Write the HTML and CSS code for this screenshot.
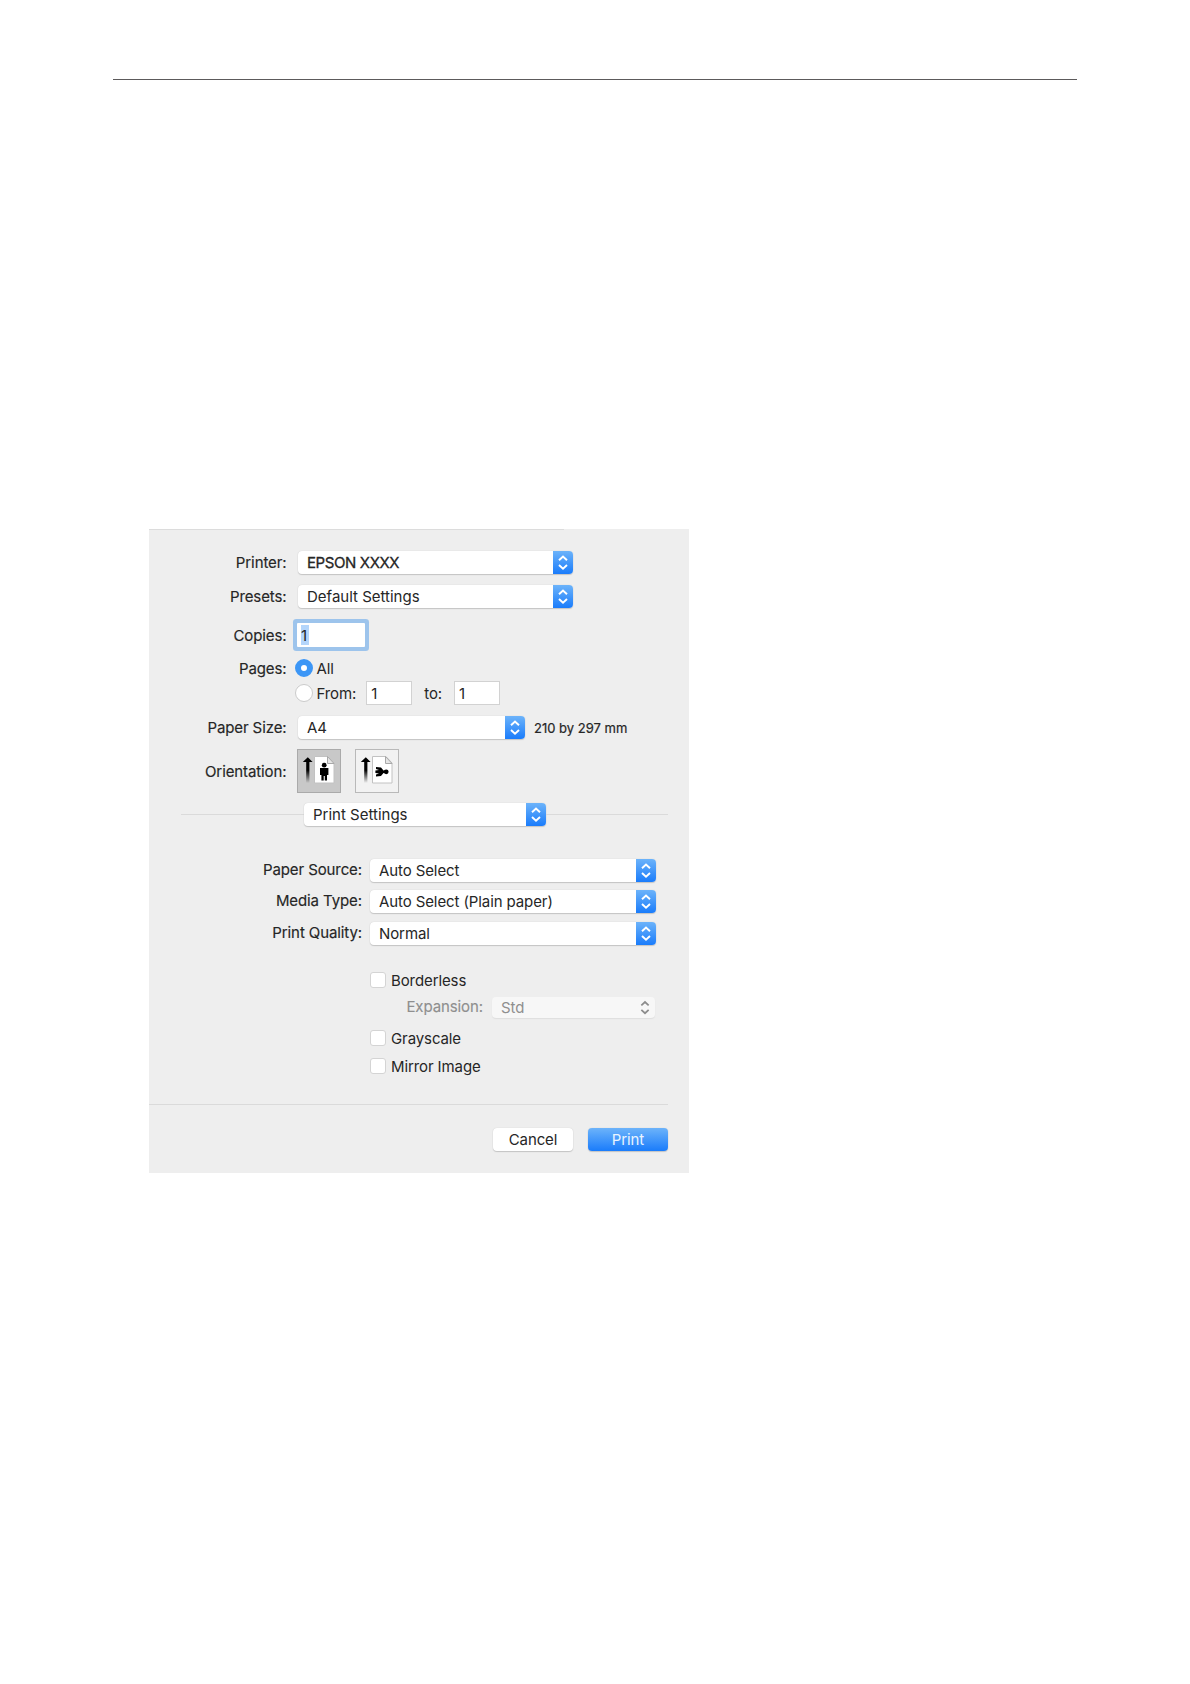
FILE: index.html
```html
<!DOCTYPE html>
<html lang="en">
    <head>
        <meta charset="UTF-8">
        <title>Print</title>
        <link rel="stylesheet" href="styles.css">
    </head>

    <body>
        <svg class="defs" width="0" height="0">
            <symbol id="arrows" viewBox="0 0 20 23">
                <path d="M6 9.3 L10 5.5 L14 9.3 M6 14 L10 17.8 L14 14" fill="none" stroke="currentColor" stroke-width="1.9"/>
            </symbol>
            <linearGradient id="fade" x1="0" y1="0" x2="0" y2="1">
                <stop offset="0.5" stop-color="#000"/>
                <stop offset="1" stop-color="#000" stop-opacity="0"/>
            </linearGradient>
            <symbol id="sheet" viewBox="0 0 44 44">
                <path d="M5.8 13 L10.8 8.3 L15.6 13 H12.4 V34 H9.2 V13 Z" fill="url(#fade)"/>
                <path d="M17.5 7.5 H31 L37 14 V34 H17.5 Z" fill="#fff" stroke="#c2c2c2"/>
                <path d="M30.5 7.5 V14.5 H37 Z" fill="#e6e6e6" stroke="#a8a8a8"/>
            </symbol>
        </svg>

        <hr class="page-line">

        <div class="dialog">
            <div class="row">
                <label>Printer:</label>
                <div class="select printer"><span class="epson">EPSON XXXX</span><svg><use href="#arrows"/></svg></div>
            </div>
            <div class="row presets">
                <label>Presets:</label>
                <div class="select printer"><span class="wide">Default Settings</span><svg><use href="#arrows"/></svg></div>
            </div>
            <div class="row copies">
                <label>Copies:</label>
                <div class="field focus"><span>1</span></div>
            </div>
            <div class="row pages">
                <label>Pages:</label>
                <i class="radio on"></i>
                <span>All</span>
            </div>
            <div class="row range">
                <i class="radio"></i>
                <span>From:</span>
                <div class="field from">1</div>
                <span>to:</span>
                <div class="field to">1</div>
            </div>
            <div class="row paper">
                <label>Paper Size:</label>
                <div class="select size"><span>A4</span><svg><use href="#arrows"/></svg></div>
                <span class="note">210 by 297 mm</span>
            </div>
            <div class="row orientation">
                <label>Orientation:</label>
                <div class="orient active">
                    <svg width="44" height="44">
                        <use href="#sheet"/>
                        <circle cx="27.2" cy="16.2" r="2.4"/>
                        <path d="M23 19 H31.4 V26 H30 V31.5 H27.8 V27 H26.7 V31.5 H24.4 V26 H23 Z"/>
                    </svg>
                </div>
                <div class="orient">
                    <svg width="44" height="44">
                        <use href="#sheet"/>
                        <circle cx="31.2" cy="22.8" r="2.4"/>
                        <path d="M21 18 L26 18.6 L28.5 21.5 H30 V24 H28.5 L26 27 L21 27.6 V25.5 L24 24.6 L20.4 24 V21.6 L24 21 L21 20 Z"/>
                    </svg>
                </div>
            </div>

            <div class="section">
                <div class="select pane"><span class="wide">Print Settings</span><svg><use href="#arrows"/></svg></div>
            </div>

            <div class="settings">
                <div class="row">
                    <label>Paper Source:</label>
                    <div class="select"><span>Auto Select</span><svg><use href="#arrows"/></svg></div>
                </div>
                <div class="row">
                    <label>Media Type:</label>
                    <div class="select"><span>Auto Select (Plain paper)</span><svg><use href="#arrows"/></svg></div>
                </div>
                <div class="row quality">
                    <label>Print Quality:</label>
                    <div class="select"><span>Normal</span><svg><use href="#arrows"/></svg></div>
                </div>
            </div>

            <div class="check borderless"><i></i><span>Borderless</span></div>
            <div class="row expansion">
                <label>Expansion:</label>
                <div class="select disabled"><span>Std</span><svg><use href="#arrows"/></svg></div>
            </div>
            <div class="check gray"><i></i><span>Grayscale</span></div>
            <div class="check mirror"><i></i><span>Mirror Image</span></div>

            <div class="buttons">
                <div class="btn">Cancel</div>
                <div class="btn primary">Print</div>
            </div>
        </div>
    </body>
</html>
```

FILE: styles.css
```css
* {
	margin: 0;
	padding: 0;
	box-sizing: border-box;
}

body {
	background: white;
	color: #262626;
	font-family: Inter, "Liberation Sans", sans-serif;
	font-size: 15px;
	letter-spacing: -0.1px;
	white-space: nowrap;
}

.defs {
	display: block;
}

.page-line {
	width: 964px;
	margin: 79px 0 0 113px;
	border: none;
	border-top: 1px solid #5c5a5b;
}

.dialog {
	width: 540px;
	height: 644px;
	margin: 449px 0 0 149px;
	padding-top: 22px;
	background: linear-gradient(#dcdcdc, #dcdcdc) no-repeat 0 0 / 415px 1px #eeeeee;
}

.row {
	display: flex;
	align-items: center;
	height: 23px;
}

.row label {
	width: 138px;
	margin-right: 11px;
	padding-right: 0.5px;
	text-align: right;
	-webkit-text-stroke: 0.15px;
}

.select {
	display: flex;
	justify-content: space-between;
	height: 23px;
	line-height: 23px;
	padding-left: 9px;
	background: white;
	border-radius: 4px;
	box-shadow: 0 1px 1px #c4c4c4, 0 0 1px #c4c4c4;
}

.select svg {
	width: 20px;
	height: 23px;
	color: white;
	background: linear-gradient(#6cb3fa, #1a7cfb);
	border-radius: 0 4px 4px 0;
}

.printer {
	width: 275px;
}

.epson {
	letter-spacing: -0.4px;
	-webkit-text-stroke: 0.3px;
}

.wide {
	letter-spacing: 0;
}

.presets {
	margin-top: 11px;
}

.copies {
	height: 32px;
	margin-top: 11px;
}

.field {
	height: 24px;
	line-height: 24px;
	padding-left: 4px;
	background: white;
	border: 1px solid #d2d2d2;
}

.focus {
	width: 68px;
	margin-left: -1px;
	padding-left: 4px;
	border: none;
	box-shadow: 0 0 0 4px #9dc4ec;
	border-radius: 1px;
}

.focus span {
	display: inline-block;
	width: 8px;
	height: 20px;
	line-height: 22px;
	margin-top: 2px;
	background: #b3d5fb;
}

.pages {
	height: 20px;
	margin-top: 7px;
}

.radio {
	width: 18px;
	height: 18px;
	margin: 0 4px 0 -3.5px;
	background: white;
	border: 1px solid #cbcbcb;
	border-radius: 50%;
}

.radio.on {
	border: 6px solid #3c96f6;
}

.range {
	height: 24px;
	margin-top: 3px;
	padding-left: 149px;
}

.from {
	width: 46px;
	margin: 0 12px 0 10px;
}

.to {
	width: 46px;
	margin-left: 12px;
}

.paper {
	margin-top: 11px;
}

.size {
	width: 227px;
}

.note {
	margin-left: 9px;
	font-size: 13px;
	letter-spacing: 0;
	-webkit-text-stroke: 0.2px;
}

.orientation {
	height: 44px;
	margin-top: 10px;
}

.orientation label {
	margin-right: 10px;
}

.orient {
	width: 44px;
	height: 44px;
	margin-right: 14px;
	background: #f2f2f2;
	box-shadow: inset 0 0 0 1px #b9b9b9;
}

.orient.active {
	background: #c8c8c8;
	box-shadow: inset 0 0 0 1px #aaaaaa;
}

.orient svg {
	display: block;
}

.section {
	display: flex;
	align-items: center;
	width: 487px;
	margin: 10px 0 0 32px;
}

.section::before,
.section::after {
	content: "";
	width: 123px;
	height: 1px;
	background: #dadada;
}

.section::after {
	flex: 1;
}

.pane {
	width: 242px;
}

.settings {
	display: grid;
	gap: 8px;
	margin-top: 33px;
}

.settings label {
	width: 213px;
	margin-right: 8px;
	padding-right: 0;
	padding-bottom: 2px;
}

.settings .select {
	width: 286px;
}

.quality {
	margin-top: 1px;
}

.check {
	display: flex;
	align-items: center;
	height: 16px;
	margin-left: 221px;
}

.check i {
	width: 16px;
	height: 16px;
	margin-right: 5px;
	background: white;
	border: 1px solid #d4d4d4;
	border-radius: 3px;
}

.borderless {
	margin-top: 27px;
}

.expansion {
	height: 21px;
	margin-top: 9px;
	color: #8f8f8f;
}

.expansion label {
	width: 334px;
	margin-right: 9px;
	padding-right: 0;
	padding-bottom: 2px;
}

.disabled {
	width: 163px;
	height: 21px;
	line-height: 22px;
	background: #f7f7f7;
	box-shadow: 0 1px 1px #dedede;
}

.disabled svg {
	height: 21px;
	color: #8c8c8c;
	background: none;
}

.gray {
	margin-top: 12px;
}

.mirror {
	margin-top: 12px;
}

.buttons {
	display: flex;
	justify-content: flex-end;
	gap: 15px;
	width: 519px;
	margin-top: 30px;
	padding-top: 23px;
	border-top: 1px solid #dadada;
}

.btn {
	width: 80px;
	height: 23px;
	line-height: 23px;
	text-align: center;
	background: white;
	border-radius: 4px;
	box-shadow: 0 1px 1px #c4c4c4, 0 0 1px #c4c4c4;
}

.primary {
	color: #e9f4ff;
	background: linear-gradient(#6cb3fa, #1a7cfb);
}
```
